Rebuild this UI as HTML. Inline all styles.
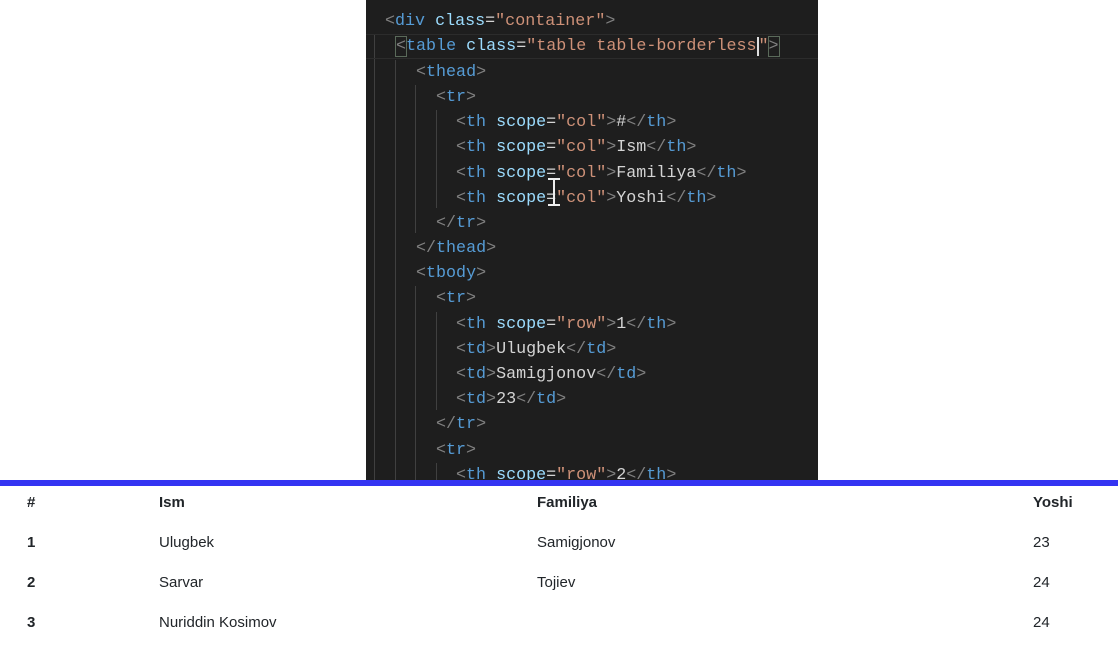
<!DOCTYPE html>
<html><head><meta charset="utf-8"><style>
*{margin:0;padding:0;box-sizing:border-box}
body{width:1118px;height:658px;background:#fff;position:relative;overflow:hidden;font-family:"Liberation Sans",sans-serif}
#code{position:absolute;left:366px;top:0;width:452px;height:481px;background:#1e1e1e;overflow:hidden}
.l{position:absolute;white-space:pre;font-family:"Liberation Mono",monospace;font-size:16.7px;color:#d4d4d4;line-height:20px}
.b{color:#808080}.t{color:#569cd6}.a{color:#9cdcfe}.s{color:#ce9178}
.g{position:absolute;width:1px;background:#404040}
#bar{position:absolute;left:0;top:480px;width:1118px;height:6px;background:#3434f2}
.c{position:absolute;font-size:15px;color:#212529}
.h{font-weight:bold}
</style></head><body>
<div id="code">
<div class="g" style="left:8px;top:35px;height:446px"></div>
<div class="g" style="left:29px;top:60px;height:421px"></div>
<div class="g" style="left:49px;top:85px;height:148px"></div>
<div class="g" style="left:70px;top:110px;height:98px"></div>
<div class="g" style="left:49px;top:286px;height:195px"></div>
<div class="g" style="left:70px;top:312px;height:98px"></div>
<div class="g" style="left:70px;top:463px;height:20px"></div>
<div style="position:absolute;left:0;top:34px;width:452px;height:25px;border-top:1px solid #2c2c2c;border-bottom:1px solid #2c2c2c"></div>
<div class="l" style="left:19px;top:12px"><span class="b">&lt;</span><span class="t">div</span> <span class="a">class</span>=<span class="s">"container"</span><span class="b">&gt;</span></div>
<div class="l" style="left:30px;top:37px"><span class="b" style="outline:1px solid #5a6a5a">&lt;</span><span class="t">table</span> <span class="a">class</span>=<span class="s">"table table-borderless</span><span style="border-left:2px solid #ddd"></span><span class="s">"</span><span class="b" style="outline:1px solid #5a6a5a">&gt;</span></div>
<div class="l" style="left:50px;top:63px"><span class="b">&lt;</span><span class="t">thead</span><span class="b">&gt;</span></div>
<div class="l" style="left:70px;top:88px"><span class="b">&lt;</span><span class="t">tr</span><span class="b">&gt;</span></div>
<div class="l" style="left:90px;top:113px"><span class="b">&lt;</span><span class="t">th</span> <span class="a">scope</span>=<span class="s">"col"</span><span class="b">&gt;</span>#<span class="b">&lt;/</span><span class="t">th</span><span class="b">&gt;</span></div>
<div class="l" style="left:90px;top:138px"><span class="b">&lt;</span><span class="t">th</span> <span class="a">scope</span>=<span class="s">"col"</span><span class="b">&gt;</span>Ism<span class="b">&lt;/</span><span class="t">th</span><span class="b">&gt;</span></div>
<div class="l" style="left:90px;top:164px"><span class="b">&lt;</span><span class="t">th</span> <span class="a">scope</span>=<span class="s">"col"</span><span class="b">&gt;</span>Familiya<span class="b">&lt;/</span><span class="t">th</span><span class="b">&gt;</span></div>
<div class="l" style="left:90px;top:189px"><span class="b">&lt;</span><span class="t">th</span> <span class="a">scope</span>=<span class="s">"col"</span><span class="b">&gt;</span>Yoshi<span class="b">&lt;/</span><span class="t">th</span><span class="b">&gt;</span></div>
<div class="l" style="left:70px;top:214px"><span class="b">&lt;/</span><span class="t">tr</span><span class="b">&gt;</span></div>
<div class="l" style="left:50px;top:239px"><span class="b">&lt;/</span><span class="t">thead</span><span class="b">&gt;</span></div>
<div class="l" style="left:50px;top:264px"><span class="b">&lt;</span><span class="t">tbody</span><span class="b">&gt;</span></div>
<div class="l" style="left:70px;top:289px"><span class="b">&lt;</span><span class="t">tr</span><span class="b">&gt;</span></div>
<div class="l" style="left:90px;top:315px"><span class="b">&lt;</span><span class="t">th</span> <span class="a">scope</span>=<span class="s">"row"</span><span class="b">&gt;</span>1<span class="b">&lt;/</span><span class="t">th</span><span class="b">&gt;</span></div>
<div class="l" style="left:90px;top:340px"><span class="b">&lt;</span><span class="t">td</span><span class="b">&gt;</span>Ulugbek<span class="b">&lt;/</span><span class="t">td</span><span class="b">&gt;</span></div>
<div class="l" style="left:90px;top:365px"><span class="b">&lt;</span><span class="t">td</span><span class="b">&gt;</span>Samigjonov<span class="b">&lt;/</span><span class="t">td</span><span class="b">&gt;</span></div>
<div class="l" style="left:90px;top:390px"><span class="b">&lt;</span><span class="t">td</span><span class="b">&gt;</span>23<span class="b">&lt;/</span><span class="t">td</span><span class="b">&gt;</span></div>
<div class="l" style="left:70px;top:415px"><span class="b">&lt;/</span><span class="t">tr</span><span class="b">&gt;</span></div>
<div class="l" style="left:70px;top:441px"><span class="b">&lt;</span><span class="t">tr</span><span class="b">&gt;</span></div>
<div class="l" style="left:90px;top:466px"><span class="b">&lt;</span><span class="t">th</span> <span class="a">scope</span>=<span class="s">"row"</span><span class="b">&gt;</span>2<span class="b">&lt;/</span><span class="t">th</span><span class="b">&gt;</span></div>
<div style="position:absolute;left:187px;top:178px;width:2px;height:28px;background:#eee"></div>
<div style="position:absolute;left:182px;top:178px;width:12px;height:2px;background:#eee"></div>
<div style="position:absolute;left:182px;top:204px;width:12px;height:2px;background:#eee"></div>
</div>
<div id="bar"></div>
<div class="c h" style="left:27px;top:494px">#</div>
<div class="c h" style="left:159px;top:494px">Ism</div>
<div class="c h" style="left:537px;top:494px">Familiya</div>
<div class="c h" style="left:1033px;top:494px">Yoshi</div>
<div class="c h" style="left:27px;top:534px">1</div>
<div class="c" style="left:159px;top:534px">Ulugbek</div>
<div class="c" style="left:537px;top:534px">Samigjonov</div>
<div class="c" style="left:1033px;top:534px">23</div>
<div class="c h" style="left:27px;top:574px">2</div>
<div class="c" style="left:159px;top:574px">Sarvar</div>
<div class="c" style="left:537px;top:574px">Tojiev</div>
<div class="c" style="left:1033px;top:574px">24</div>
<div class="c h" style="left:27px;top:614px">3</div>
<div class="c" style="left:159px;top:614px">Nuriddin Kosimov</div>
<div class="c" style="left:1033px;top:614px">24</div>
</body></html>
